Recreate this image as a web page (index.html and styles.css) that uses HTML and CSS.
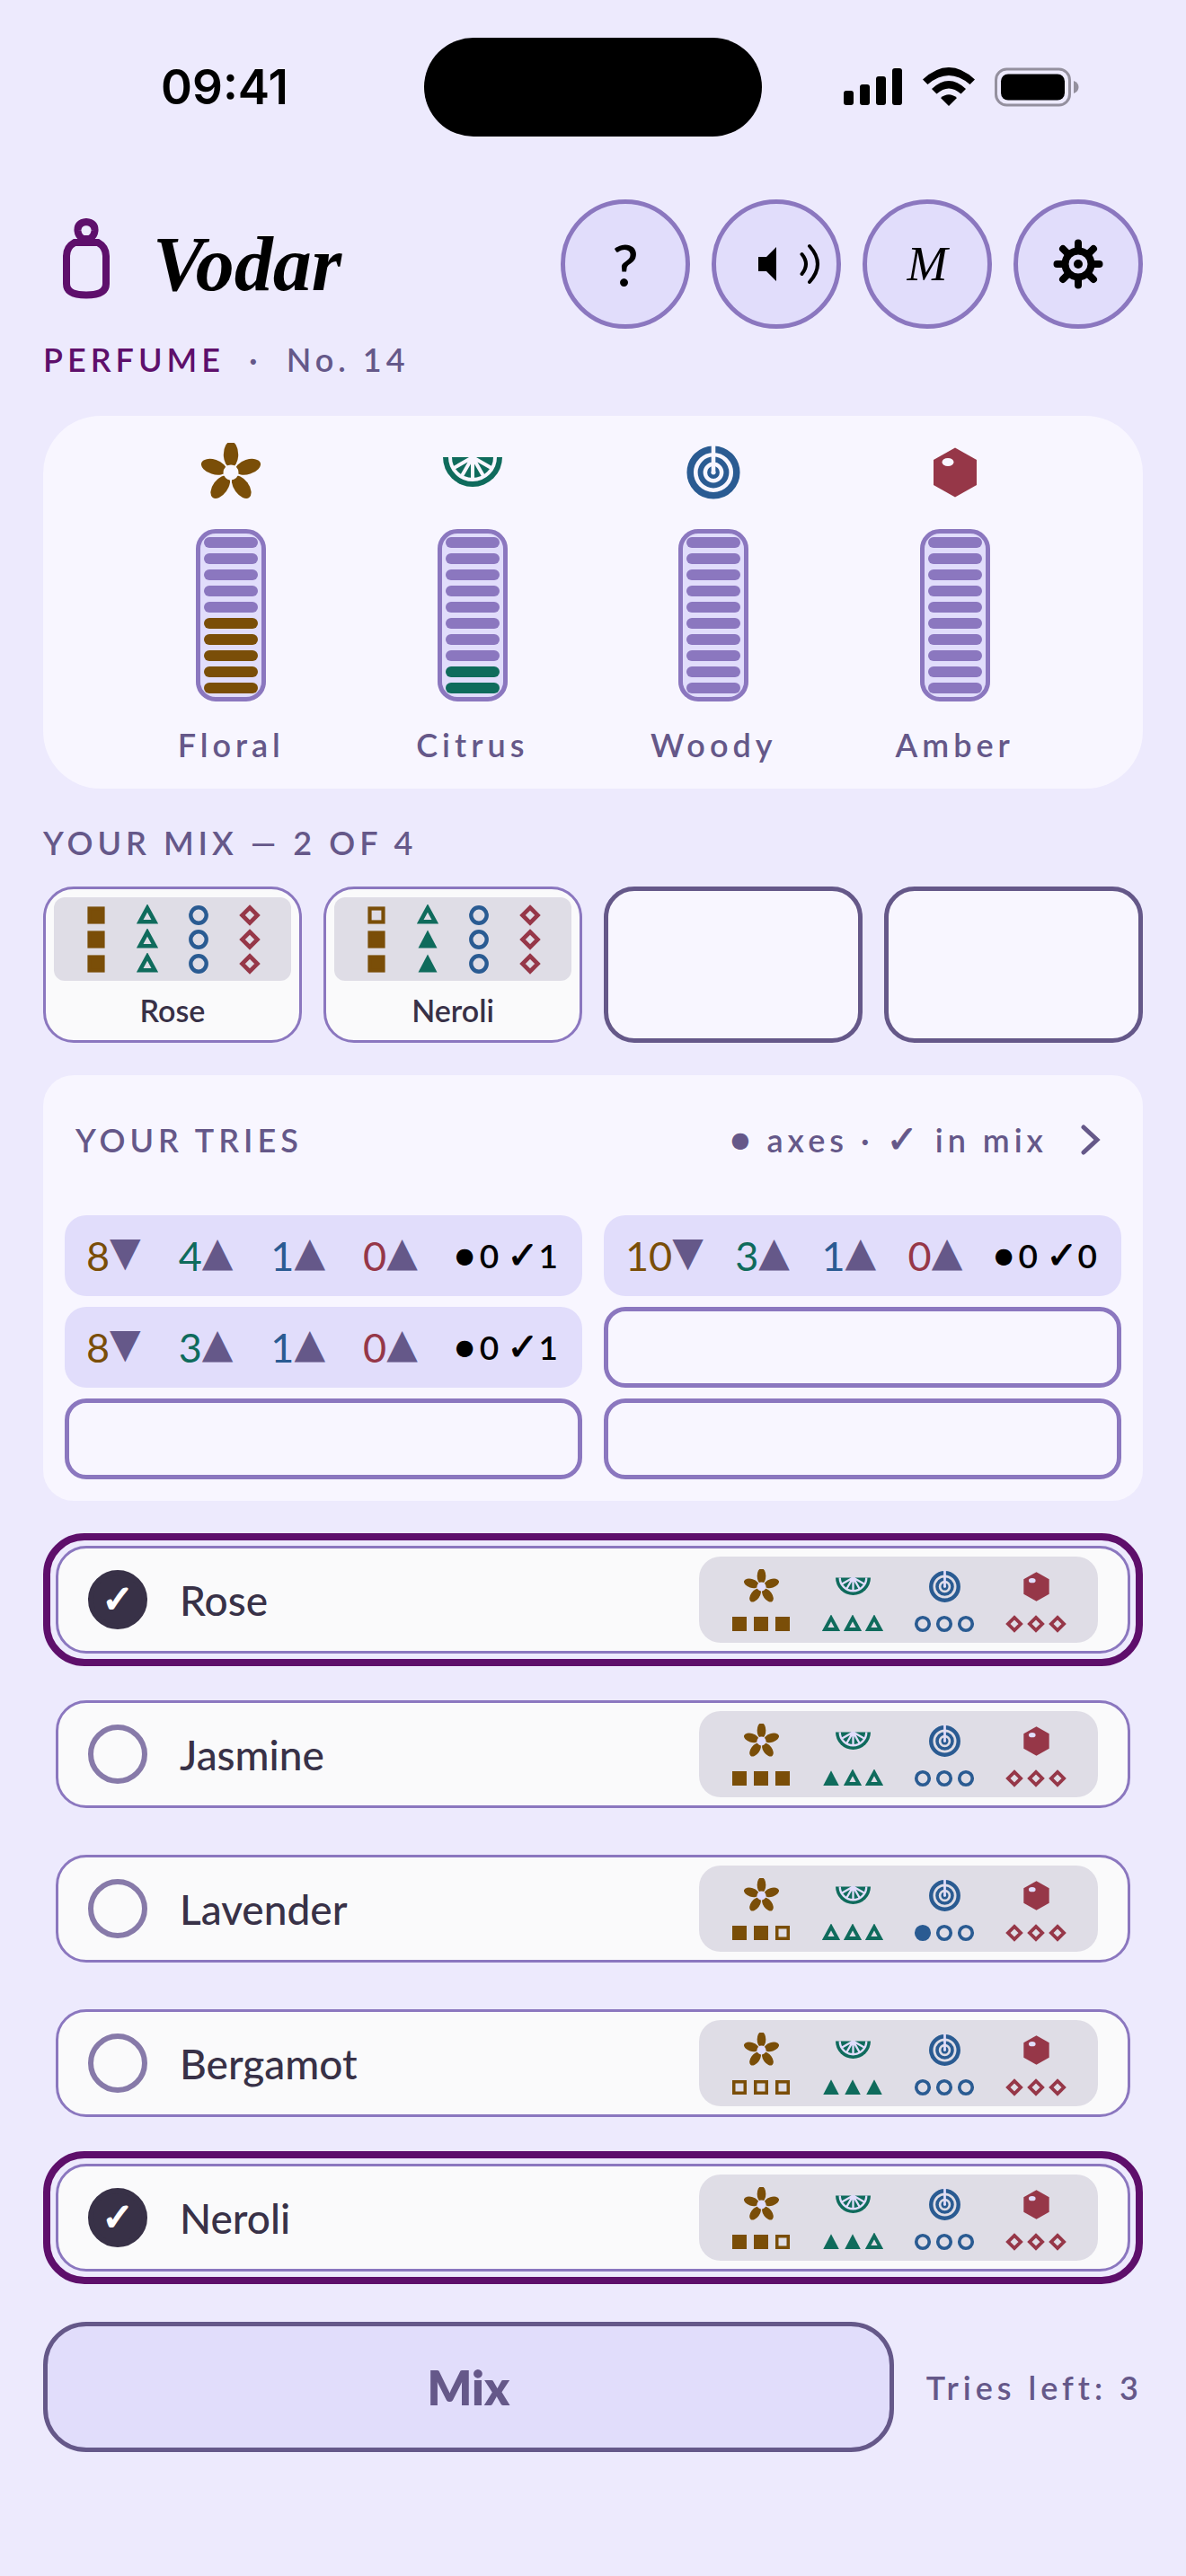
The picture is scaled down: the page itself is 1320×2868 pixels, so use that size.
FILE: index.html
```html
<!DOCTYPE html>
<html lang="en">
<head>
  <meta charset="UTF-8" />
  <meta name="viewport" content="width=device-width, initial-scale=1.0" />
  <title>Vodar</title>
  <link rel="stylesheet" href="styles.css">
</head>
<body>
  <!-- Shared shapes -->
  <svg class="sprite" aria-hidden="true">
    <symbol id="icon-floral" viewBox="-33 -33 66 66" overflow="visible">
      <g fill="currentColor">
        <ellipse cy="-20" rx="8.2" ry="14.5" />
        <ellipse cy="-20" rx="8.2" ry="14.5" transform="rotate(72)" />
        <ellipse cy="-20" rx="8.2" ry="14.5" transform="rotate(144)" />
        <ellipse cy="-20" rx="8.2" ry="14.5" transform="rotate(216)" />
        <ellipse cy="-20" rx="8.2" ry="14.5" transform="rotate(288)" />
      </g>
      <circle class="cut-fill" r="8.5" />
    </symbol>
    <symbol id="icon-citrus" viewBox="-33 -33 66 66" overflow="visible">
      <path fill="currentColor" d="M-33 -17a33 33 0 0 0 66 0z" />
      <path class="cut-line" stroke-width="4" d="M-25 -17a25 25 0 0 0 50 0" />
      <path class="cut-line" stroke-width="4" d="M0 -17L-21.7 -4.5M0 -17L-12.5 4.7M0 -17V8M0 -17L12.5 4.7M0 -17L21.7 -4.5" />
      <path class="cut-fill" d="M-4 -17a4 4 0 0 0 8 0z" />
    </symbol>
    <symbol id="icon-woody" viewBox="-33 -33 66 66" overflow="visible">
      <g fill="none" stroke="currentColor">
        <circle r="25.8" stroke-width="7.5" />
        <circle r="14.4" stroke-width="6" />
        <circle r="4.7" stroke-width="4.4" />
      </g>
      <path class="cut-line" stroke-width="4.6" d="M0 -31V1" />
    </symbol>
    <symbol id="icon-amber" viewBox="-33 -33 66 66" overflow="visible">
      <path fill="currentColor" d="M0 -27.5L24 -14V14L0 27.5L-24 14V-14z" />
      <ellipse class="cut-fill" cx="-8" cy="-11.5" rx="6.5" ry="4.5" />
    </symbol>

    <symbol id="mark-floral" viewBox="0 0 24 24"><rect x="4.5" y="4.5" width="15" height="15" stroke="currentColor" stroke-width="4.2" /></symbol>
    <symbol id="mark-citrus" viewBox="0 0 24 24" overflow="visible"><path d="M12 4L20.3 19.2H3.7z" stroke="currentColor" stroke-width="4.6" /></symbol>
    <symbol id="mark-citrus-full" viewBox="0 0 24 24"><path d="M12 1.5L22.5 21.5H1.5z" fill="currentColor" /></symbol>
    <symbol id="mark-woody" viewBox="0 0 24 24"><circle cx="12" cy="12" r="8.7" stroke="currentColor" stroke-width="4.4" /></symbol>
    <symbol id="mark-amber" viewBox="0 0 24 24" overflow="visible"><path d="M12 3.5L20.5 12L12 20.5L3.5 12z" stroke="currentColor" stroke-width="4.6" /></symbol>
  </svg>

  <div class="status-bar">
    <span class="time">09:41</span>
    <span class="island"></span>
    <span class="status-icons">
      <svg width="66" height="44" viewBox="0 0 66 44">
        <rect x="0" y="26" width="11" height="16" rx="3" />
        <rect x="18" y="19" width="11" height="23" rx="3" />
        <rect x="36" y="10" width="11" height="32" rx="3" />
        <rect x="54" y="1" width="11" height="41" rx="3" />
      </svg>
      <svg width="58" height="44" viewBox="0 0 58 44">
        <path d="M0 13.5Q29 -13.5 58 13.5L52.5 19Q29 -1 5.5 19z" />
        <path d="M10 24Q29 6 48 24L42.5 29.5Q29 17.5 15.5 29.5z" />
        <path d="M20 34Q29 26.5 38 34L29 43z" />
      </svg>
      <svg width="94" height="44" viewBox="0 0 94 44">
        <rect class="battery-shell" x="1.5" y="2" width="82" height="40" rx="12" />
        <rect x="7" y="7.5" width="71" height="29" rx="8" />
        <path class="battery-nub" d="M88 15q5.5 2 5.5 7t-5.5 7z" />
      </svg>
    </span>
  </div>

  <main class="app">
    <header>
      <div class="top-row">
        <svg class="logo" width="96" height="96" viewBox="48 246 96 96">
          <path d="M83 270H109Q118 275 118 285V316Q118 328.5 96 328.5T74 316V285Q74 275 83 270z" />
          <path d="M96 247Q106 248 105.5 257Q105 263 99.5 266H92.5Q87 263 86.5 257Q86 248 96 247z" />
        </svg>
        <h1>Vodar</h1>
        <nav class="tools">
          <button class="tool" aria-label="Help">?</button>
          <button class="tool" aria-label="Sound">
            <svg width="100" height="60" viewBox="-50 -30 100 60">
              <path d="M-20 -8H-11L0 -19V19L-11 8H-20z" />
              <path class="wave" d="M28.5 -11Q37.5 0 28.5 11M37 -20Q55 0 37 20" />
            </svg>
          </button>
          <button class="tool tool-m" aria-label="Mode">M</button>
          <button class="tool" aria-label="Settings">
            <svg width="60" height="60" viewBox="-30 -30 60 60">
              <circle class="gear-ring" r="14.5" />
              <path class="gear-teeth" d="M0 -17V-23.5M0 17V23.5M-17 0H-23.5M17 0H23.5M-12.5 -12.5L-17 -17M12.5 -12.5L17 -17M-12.5 12.5L-17 17M12.5 12.5L17 17" />
              <circle r="5" />
            </svg>
          </button>
        </nav>
      </div>
      <p class="puzzle"><span class="puzzle-kind">PERFUME</span><span>·</span><span>No. 14</span></p>
    </header>

    <section class="gauges" id="gauges"></section>

    <section class="mix">
      <h2 class="caption">YOUR MIX — 2 OF 4</h2>
      <div class="slots" id="slots"></div>
    </section>

    <section class="tries">
      <button class="tries-head">
        <span class="caption">YOUR TRIES</span>
        <span class="legend caption"><span><i class="dot">●</i> axes · <i class="tick">✓</i> in mix</span>
          <svg width="24" height="36" viewBox="0 0 24 36"><path d="M4 4L19 18L4 32" /></svg>
        </span>
      </button>
      <div class="tries-grid" id="tries"></div>
    </section>

    <section class="notes" id="notes"></section>

    <footer>
      <button class="mix-button">Mix</button>
      <span class="caption">Tries left: 3</span>
    </footer>
  </main>

  <script src="script.js"></script>
</body>
</html>
```
FILE: styles.css
```css
:root {
  --bg: #edeafd;
  --card: #f8f6ff;
  --tint: #e1ddfb;
  --line: #8b77bf;
  --muted: #655889;
  --accent: #5e0f6b;
  --ink: #383147;
}

* {
  box-sizing: border-box;
}

body {
  margin: 0;
  background: var(--bg);
  font-family: Lato, "Open Sans", sans-serif;
  color: #000;
}

h1, h2, p {
  margin: 0;
}

button {
  font-family: inherit;
  color: inherit;
  padding: 0;
  cursor: pointer;
}

svg {
  display: block;
  flex: none;
}

.sprite {
  position: absolute;
  width: 0;
  height: 0;
}
.cut-fill {
  fill: var(--cut);
}
.cut-line {
  fill: none;
  stroke: var(--cut);
}

/* Axis colors */
.floral { color: #7a4e08; }
.citrus { color: #0f6b5c; }
.woody { color: #2a5b92; }
.amber { color: #963748; }

/* Status bar */
.status-bar {
  display: grid;
  grid-template-columns: 1fr 376px 1fr;
  align-items: center;
  justify-items: center;
  padding: 42px 28px 70px;
}
.time {
  font: 600 53px/64px Inter, sans-serif;
}
.island {
  width: 100%;
  height: 110px;
  border-radius: 55px;
  background: #000;
}
.status-icons {
  display: flex;
  gap: 22px;
}
.battery-shell {
  fill: none;
  stroke: #94909e;
  stroke-width: 3;
}
.battery-nub {
  fill: #94909e;
}

.app {
  display: flex;
  flex-direction: column;
  gap: 36px;
  padding: 0 48px 48px;
}

/* Header */
.top-row {
  display: flex;
  align-items: center;
}
.logo {
  overflow: visible;
  fill: none;
  stroke: var(--accent);
  stroke-width: 8;
}
h1 {
  margin-left: 26px;
  font: italic bold 86px/96px "Liberation Serif", serif;
}
.tools {
  display: flex;
  gap: 24px;
  margin-left: auto;
}
.tool {
  display: flex;
  align-items: center;
  justify-content: center;
  width: 144px;
  height: 144px;
  border: 5px solid var(--line);
  border-radius: 50%;
  background: var(--tint);
  font-size: 64px;
  font-weight: 600;
}
.tool-m {
  font: italic 54px "Liberation Serif", serif;
}
.wave {
  fill: none;
  stroke: #000;
  stroke-width: 4;
  stroke-linecap: round;
}
.gear-ring, .gear-teeth {
  fill: none;
  stroke: #000;
  stroke-width: 8;
  stroke-linecap: round;
}
.puzzle, .caption, .gauge-name {
  font-size: 36px;
  line-height: 48px;
  font-weight: 600;
  letter-spacing: 5px;
  color: var(--muted);
}
.puzzle {
  display: flex;
  gap: 27px;
  margin: 10px 0 3px;
}
.puzzle-kind {
  color: var(--accent);
}

/* Gauges */
.gauges {
  --cut: var(--card);
  display: grid;
  grid-template-columns: repeat(4, 1fr);
  padding: 30px 75px 25px;
  border-radius: 64px;
  background: var(--card);
}
.gauge {
  display: flex;
  flex-direction: column;
  align-items: center;
}
.gauge > svg {
  width: 66px;
  height: 66px;
}
.tube {
  display: flex;
  flex-direction: column-reverse;
  gap: 6px;
  margin: 30px 0 24px;
  padding: 4px;
  border: 5px solid var(--line);
  border-radius: 22px;
  background: var(--tint);
}
.tube span {
  width: 60px;
  height: 12px;
  border-radius: 6px;
  background: var(--line);
}
.tube .on {
  background: currentColor;
}

/* Chosen mix */
.mix {
  display: flex;
  flex-direction: column;
  gap: 25px;
}
.slots {
  display: grid;
  grid-template-columns: repeat(4, 1fr);
  gap: 24px;
}
.slot {
  height: 174px;
  border: 5px solid var(--muted);
  border-radius: 34px;
  background: var(--card);
}
.slot-full {
  display: flex;
  flex-direction: column;
  align-items: stretch;
  padding: 9px 9px 0;
  border: 3px solid var(--line);
  background: #fafafb;
  color: var(--ink);
  font-size: 34px;
  line-height: 66px;
  font-weight: 600;
}
.slot-marks {
  display: flex;
  flex: none;
  justify-content: center;
  align-items: center;
  gap: 33px;
  height: 93px;
  border-radius: 12px;
  background: #dfdde6;
}
.slot-marks .marks {
  flex-direction: column;
  gap: 3px;
}
.marks {
  display: flex;
  gap: 4px;
  fill: none;
}
.marks svg {
  width: 20px;
  height: 20px;
}
.slot-marks .marks svg {
  width: 24px;
  height: 24px;
}
.marks .full {
  fill: currentColor;
}

/* Tries */
.tries {
  padding: 24px;
  border-radius: 34px;
  background: var(--card);
}
.tries-head {
  display: flex;
  align-items: center;
  justify-content: space-between;
  width: 100%;
  height: 96px;
  margin-bottom: 36px;
  padding: 0 22px 0 12px;
  border: 0;
  background: none;
}
.legend {
  display: flex;
  align-items: center;
  gap: 36px;
}
.legend path {
  fill: none;
  stroke: var(--muted);
  stroke-width: 5;
  stroke-linecap: round;
}
.dot, .tick {
  font-family: "DejaVu Sans", sans-serif;
  font-style: normal;
  line-height: 1;
}
.dot {
  font-size: 24px;
  vertical-align: 6px;
}
.tick {
  font-size: 42px;
  -webkit-text-stroke: 1px;
}
.tries-grid {
  display: grid;
  grid-template-columns: 1fr 1fr;
  gap: 12px 24px;
}
.try {
  display: flex;
  align-items: center;
  justify-content: space-between;
  height: 90px;
  padding: 0 27px 0 24px;
  border-radius: 24px;
  background: var(--tint);
  font-size: 45px;
  line-height: 54px;
}
.try-empty {
  border: 5px solid var(--line);
  background: none;
}
.arrow {
  font-family: "DejaVu Sans", sans-serif;
  line-height: 1;
  vertical-align: 6px;
  color: var(--muted);
}
.tally {
  font-size: 37px;
  font-weight: 600;
}
.tally .dot {
  margin-right: 6px;
}

/* Notes to choose from */
.notes {
  display: flex;
  flex-direction: column;
  gap: 24px;
}
.note {
  padding: 6px;
  border: 8px solid transparent;
  border-radius: 46px;
  cursor: pointer;
}
.note:has(:checked) {
  border-color: var(--accent);
}
.note-body {
  display: flex;
  align-items: center;
  gap: 36px;
  height: 120px;
  padding: 0 33px;
  border: 3px solid var(--line);
  border-radius: 34px;
  background: #fafafb;
  color: var(--ink);
  font-size: 46px;
  font-weight: 500;
}
.note input {
  appearance: none;
  display: flex;
  align-items: center;
  justify-content: center;
  width: 66px;
  height: 66px;
  margin: 0;
  border: 6px solid #877aa9;
  border-radius: 50%;
}
.note input:checked {
  border-color: var(--ink);
  background: var(--ink);
}
.note input:checked::after {
  content: "✓";
  font: bold 42px/54px "DejaVu Sans", sans-serif;
  -webkit-text-stroke: 2px;
  color: #fff;
}
.profile {
  --cut: var(--tint);
  display: grid;
  grid-template-columns: repeat(4, 102px);
  height: 96px;
  margin-left: auto;
  padding: 14px 18px 0;
  border-radius: 24px;
  background: #dfdde6;
}
.profile-axis {
  display: flex;
  flex-direction: column;
  align-items: center;
  gap: 12px;
}
.profile-axis > svg {
  width: 39px;
  height: 39px;
}

/* Footer */
footer {
  display: flex;
  align-items: center;
  gap: 36px;
  margin-top: 6px;
}
.mix-button {
  flex: 1;
  height: 145px;
  border: 5px solid var(--muted);
  border-radius: 48px;
  background: var(--tint);
  color: var(--muted);
  font-size: 52px;
  font-weight: 800;
}
```
FILE: script.js
```js
const axes = ["floral", "citrus", "woody", "amber"];
const names = { floral: "Floral", citrus: "Citrus", woody: "Woody", amber: "Amber" };
const levels = { floral: 5, citrus: 2, woody: 0, amber: 0 };

const notes = [
  { name: "Rose", values: [3, 0, 0, 0], picked: true },
  { name: "Jasmine", values: [3, 1, 0, 0] },
  { name: "Lavender", values: [2, 0, 1, 0] },
  { name: "Bergamot", values: [0, 3, 0, 0] },
  { name: "Neroli", values: [2, 2, 0, 0], picked: true },
];

const tries = [
  { totals: [8, 4, 1, 0], axes: 0, inMix: 1 },
  { totals: [10, 3, 1, 0], axes: 0, inMix: 0 },
  { totals: [8, 3, 1, 0], axes: 0, inMix: 1 },
];
const target = [5, 5, 5, 5];
const maxTries = 6;
const maxSlots = 4;

function icon(id, cls = "") {
  return `<svg class="${cls}"><use href="#${id}"></use></svg>`;
}

// Three marks per axis, the first `value` of them filled in
function marks(axis, value, reversed) {
  let list = [0, 1, 2].map(i => {
    if (i >= value) return icon("mark-" + axis);
    return icon(axis === "citrus" ? "mark-citrus-full" : "mark-" + axis, "full");
  });
  if (reversed) list.reverse();
  return `<span class="marks ${axis}">${list.join("")}</span>`;
}

document.getElementById("gauges").innerHTML = axes.map(axis => {
  let bars = "";
  for (let i = 0; i < 10; i++) {
    bars += `<span class="${i < levels[axis] ? "on" : ""}"></span>`;
  }
  return `<div class="gauge ${axis}">${icon("icon-" + axis)}
    <div class="tube">${bars}</div>
    <span class="gauge-name">${names[axis]}</span>
  </div>`;
}).join("");

// Slots stack their marks from the bottom up
const picked = notes.filter(n => n.picked);
let slots = picked.map(n => `<button class="slot slot-full">
    <span class="slot-marks">${axes.map((a, i) => marks(a, n.values[i], true)).join("")}</span>
    <span>${n.name}</span>
  </button>`).join("");
for (let i = picked.length; i < maxSlots; i++) {
  slots += `<div class="slot"></div>`;
}
document.getElementById("slots").innerHTML = slots;

let rows = tries.map(t => {
  const totals = t.totals.map((n, i) =>
    `<span class="${axes[i]}">${n}<span class="arrow">${n > target[i] ? "▼" : "▲"}</span></span>`
  ).join("");
  return `<div class="try">${totals}
    <span class="tally"><i class="dot">●</i>${t.axes} <i class="tick">✓</i>${t.inMix}</span>
  </div>`;
}).join("");
for (let i = tries.length; i < maxTries; i++) {
  rows += `<div class="try try-empty"></div>`;
}
document.getElementById("tries").innerHTML = rows;

document.getElementById("notes").innerHTML = notes.map(n => `<label class="note">
    <span class="note-body">
      <input type="checkbox" ${n.picked ? "checked" : ""}>
      <span>${n.name}</span>
      <span class="profile">${axes.map((a, i) =>
        `<span class="profile-axis ${a}">${icon("icon-" + a)}${marks(a, n.values[i])}</span>`
      ).join("")}</span>
    </span>
  </label>`).join("");
```
